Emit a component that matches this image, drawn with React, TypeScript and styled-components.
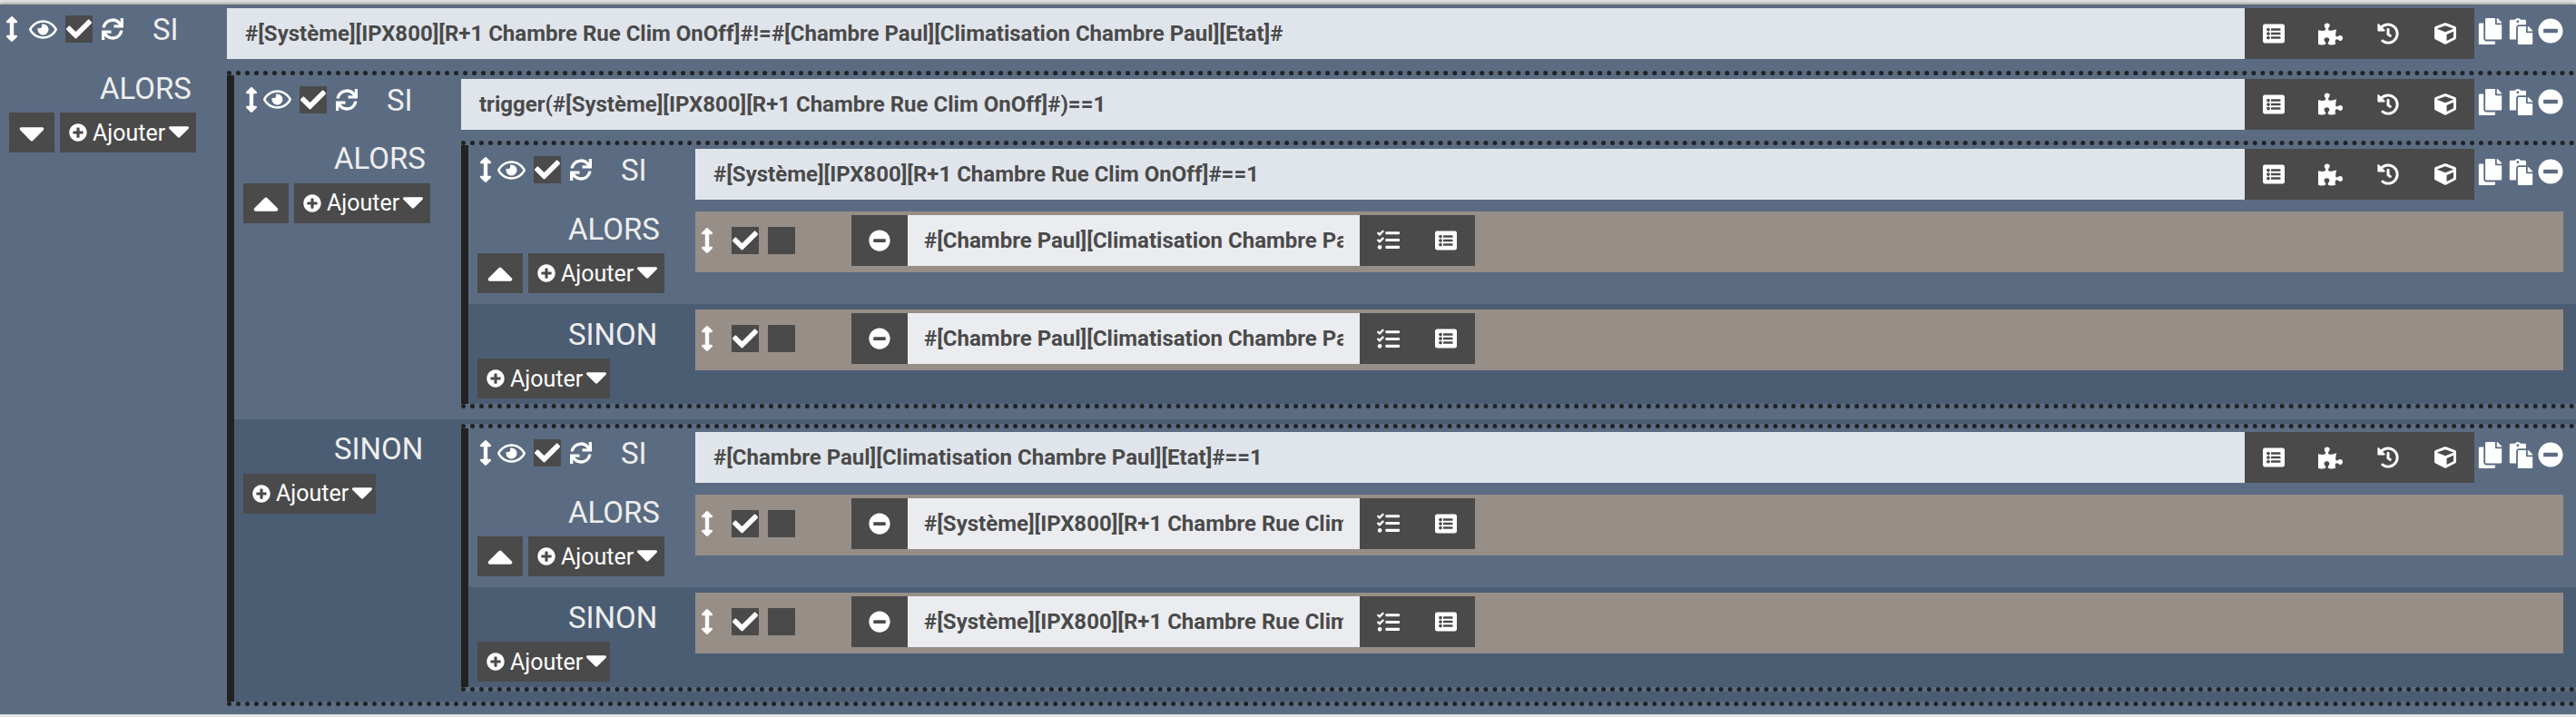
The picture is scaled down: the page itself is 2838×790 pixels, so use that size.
import React from 'react'
import styled, { createGlobalStyle } from 'styled-components'
import {
  FaArrowsAltV,
  FaCaretDown,
  FaCaretUp,
  FaCheck,
  FaCopy,
  FaCube,
  FaHistory,
  FaListAlt,
  FaMinusCircle,
  FaPaste,
  FaPlusCircle,
  FaPuzzlePiece,
  FaRegEye,
  FaSync,
  FaTasks,
} from 'react-icons/fa'

const GlobalStyle = createGlobalStyle`
  html, body {
    margin: 0;
    padding: 0;
    background: #e4e4e4;
    overflow: hidden;
  }
  body {
    font-family: Roboto, "Liberation Sans", sans-serif;
  }
`

const Panel = styled.div`
  margin-top: 5px;
  height: 782px;
  background: #5b6c82;
  box-shadow: 0 0 5px rgba(0, 0, 0, 0.55);
  overflow: hidden;
`

const Frame = styled.div<{ $nested: boolean; $dark?: boolean }>`
  ${(p) =>
    p.$nested &&
    `
    background: #5b6c82;
    border-top: 5px dotted #222;
    border-bottom: 5px dotted #222;
    margin: ${p.$dark ? '-0.5px 0 4.5px' : '0 0 -0.5px'};
  `}
`

const Body = styled.div<{ $nested: boolean }>`
  border-left: ${(p) => (p.$nested ? '8px solid #222' : '0')};
`

const ConditionRow = styled.div`
  display: flex;
  padding: 4px 14px 0 0;
`

const Toolbar = styled.div`
  flex: 0 0 250px;
  display: flex;
  align-items: center;
  height: 30px;
  margin-top: 8px;
  color: #fff;
`

const Handle = styled(FaArrowsAltV)<{ $left: number }>`
  flex: none;
  font-size: 28px;
  margin-left: ${(p) => p.$left}px;
`

const Eye = styled(FaRegEye)<{ $left: number }>`
  flex: none;
  font-size: 31px;
  margin-left: ${(p) => p.$left}px;
`

const CheckBox = styled.div<{ $left: number }>`
  flex: none;
  width: 30px;
  height: 30px;
  margin-left: ${(p) => p.$left}px;
  background: #4a4a4a;
  color: #fff;
  display: flex;
  align-items: center;
  justify-content: center;
  font-size: 28px;
  overflow: visible;
`

const Refresh = styled(FaSync)`
  flex: none;
  font-size: 24px;
  margin-left: 10px;
`

const SiLabel = styled.span`
  font-size: 33px;
  font-weight: 400;
  line-height: 30px;
  margin: 2px 0 0 32px;
  color: #eee;
`

const Expression = styled.div`
  flex: 1;
  min-width: 0;
  height: 56px;
  padding: 0 20px;
  box-sizing: border-box;
  background: #e0e5ec;
  color: #4a4a4a;
  font-size: 24px;
  font-weight: 700;
  line-height: 56px;
  white-space: nowrap;
  overflow: hidden;
`

const Tools = styled.div`
  flex: none;
  display: flex;
  height: 56px;
  background: #4a4a4a;
  color: #fff;
`

const Tool = styled.div<{ $size?: number }>`
  width: 63.25px;
  display: flex;
  align-items: center;
  justify-content: center;
  font-size: ${(p) => p.$size ?? 24}px;
`

const RowIcons = styled.div`
  flex: 0 0 98px;
  display: flex;
  align-items: flex-start;
  gap: 4.5px;
  padding: 11px 0 0 3px;
  height: 45px;
  box-sizing: border-box;
  color: #fff;
  font-size: 29px;
`

const RoundMinus = styled(FaMinusCircle)`
  flex: none;
  font-size: 28px;
`

const Section = styled.div<{ $dark?: boolean }>`
  display: grid;
  grid-template-columns: 250px minmax(0, 1fr);
  background: ${(p) => (p.$dark ? '#4b5d73' : 'transparent')};
  padding: ${(p) => (p.$dark ? '6px 0 6px' : '12.5px 0 12px')};
`

const SectionLabel = styled.div<{ $dark?: boolean }>`
  margin: ${(p) => (p.$dark ? '7.5px' : '0')} 0 6.5px 110px;
  color: #eee;
  font-size: 33px;
  font-weight: 400;
  line-height: 40px;
`

const Buttons = styled.div`
  display: flex;
  gap: 6px;
  margin-left: 10px;
`

const DarkButton = styled.div`
  height: 44px;
  box-sizing: border-box;
  background: #4a4a4a;
  color: #fff;
  display: flex;
  align-items: center;
`

const Collapse = styled(DarkButton)`
  width: 50px;
  justify-content: center;
  font-size: 46px;
`

const AddButton = styled(DarkButton)<{ $tight?: boolean }>`
  padding: 0 ${(p) => (p.$tight ? '5px' : '9px')} 0 10px;
  font-size: 25px;
  gap: 6px;

  > svg:first-child {
    flex: none;
    font-size: 20px;
  }

  > svg:last-child {
    flex: none;
    font-size: 38px;
    margin: -4px -9px 0 -10px;
  }
`

const Action = styled.div`
  display: flex;
  align-items: center;
  height: 67px;
  margin-right: 14px;
  padding: 4px 0 7px 0;
  box-sizing: border-box;
  background: #968e87;
  color: #fff;

  & + & {
    margin-top: 6px;
  }
`

const ActionGroup = styled.div`
  display: flex;
  height: 56px;
  margin-left: 62px;
`

const RemoveButton = styled.div`
  width: 62px;
  background: #4a4a4a;
  display: flex;
  align-items: center;
  justify-content: center;
  font-size: 24px;
`

const ActionField = styled.div`
  width: 462px;
  padding: 0 18px;
  background: #eaecf0;
  color: #4a4a4a;
  font-size: 24px;
  font-weight: 700;
  line-height: 56px;
  white-space: nowrap;
  overflow: hidden;
`

const ClippedText = styled.div`
  overflow: hidden;
`

type ActionItem = { expression: string }

type Branch = { block?: IfBlock; actions?: ActionItem[] }

type IfBlock = {
  condition: string
  alors: Branch
  sinon?: Branch
}

const ActionRow: React.FC<ActionItem> = ({ expression }) => (
  <Action>
    <Handle $left={-1} />
    <CheckBox $left={13}>
      <FaCheck />
    </CheckBox>
    <CheckBox $left={10} />
    <ActionGroup>
      <RemoveButton>
        <FaMinusCircle />
      </RemoveButton>
      <ActionField>
        <ClippedText>{expression}</ClippedText>
      </ActionField>
      <Tools>
        <Tool $size={25}>
          <FaTasks />
        </Tool>
        <Tool>
          <FaListAlt />
        </Tool>
      </Tools>
    </ActionGroup>
  </Action>
)

const BranchSection: React.FC<{
  label: string
  dark?: boolean
  collapse?: 'up' | 'down'
  branch: Branch
}> = ({ label, dark, collapse, branch }) => (
  <Section $dark={dark}>
    <div>
      <SectionLabel $dark={dark}>{label}</SectionLabel>
      <Buttons>
        {collapse && (
          <Collapse>
            {collapse === 'up' ? <FaCaretUp /> : <FaCaretDown />}
          </Collapse>
        )}
        <AddButton $tight={!collapse}>
          <FaPlusCircle />
          Ajouter
          <FaCaretDown />
        </AddButton>
      </Buttons>
    </div>
    <div>
      {branch.block && <Block data={branch.block} nested dark={dark} />}
      {branch.actions?.map((action, i) => (
        <ActionRow key={i} {...action} />
      ))}
    </div>
  </Section>
)

const Block: React.FC<{ data: IfBlock; nested?: boolean; dark?: boolean }> = ({
  data,
  nested = false,
  dark,
}) => (
  <Frame $nested={nested} $dark={dark}>
    <Body $nested={nested}>
      <ConditionRow>
        <Toolbar>
          <Handle $left={nested ? 5 : -1} />
          <Eye $left={nested ? -1 : 5} />
          <CheckBox $left={9}>
            <FaCheck />
          </CheckBox>
          <Refresh />
          <SiLabel>SI</SiLabel>
        </Toolbar>
        <Expression>{data.condition}</Expression>
        <Tools>
          <Tool>
            <FaListAlt />
          </Tool>
          <Tool $size={27}>
            <FaPuzzlePiece />
          </Tool>
          <Tool>
            <FaHistory />
          </Tool>
          <Tool>
            <FaCube />
          </Tool>
        </Tools>
        <RowIcons>
          <FaCopy />
          <FaPaste />
          <RoundMinus />
        </RowIcons>
      </ConditionRow>
      <BranchSection
        label="ALORS"
        collapse={nested ? 'up' : 'down'}
        branch={data.alors}
      />
      {data.sinon && <BranchSection label="SINON" dark branch={data.sinon} />}
    </Body>
  </Frame>
)

const scenario: IfBlock = {
  condition:
    '#[Système][IPX800][R+1 Chambre Rue Clim OnOff]#!=#[Chambre Paul][Climatisation Chambre Paul][Etat]#',
  alors: {
    block: {
      condition: 'trigger(#[Système][IPX800][R+1 Chambre Rue Clim OnOff]#)==1',
      alors: {
        block: {
          condition: '#[Système][IPX800][R+1 Chambre Rue Clim OnOff]#==1',
          alors: {
            actions: [
              { expression: '#[Chambre Paul][Climatisation Chambre Paul][On]#' },
            ],
          },
          sinon: {
            actions: [
              { expression: '#[Chambre Paul][Climatisation Chambre Paul][Off]#' },
            ],
          },
        },
      },
      sinon: {
        block: {
          condition: '#[Chambre Paul][Climatisation Chambre Paul][Etat]#==1',
          alors: {
            actions: [
              { expression: '#[Système][IPX800][R+1 Chambre Rue Clim On]#' },
            ],
          },
          sinon: {
            actions: [
              { expression: '#[Système][IPX800][R+1 Chambre Rue Clim Off]#' },
            ],
          },
        },
      },
    },
  },
}

const App: React.FC = () => (
  <>
    <GlobalStyle />
    <Panel>
      <Block data={scenario} />
    </Panel>
  </>
)

export default App
